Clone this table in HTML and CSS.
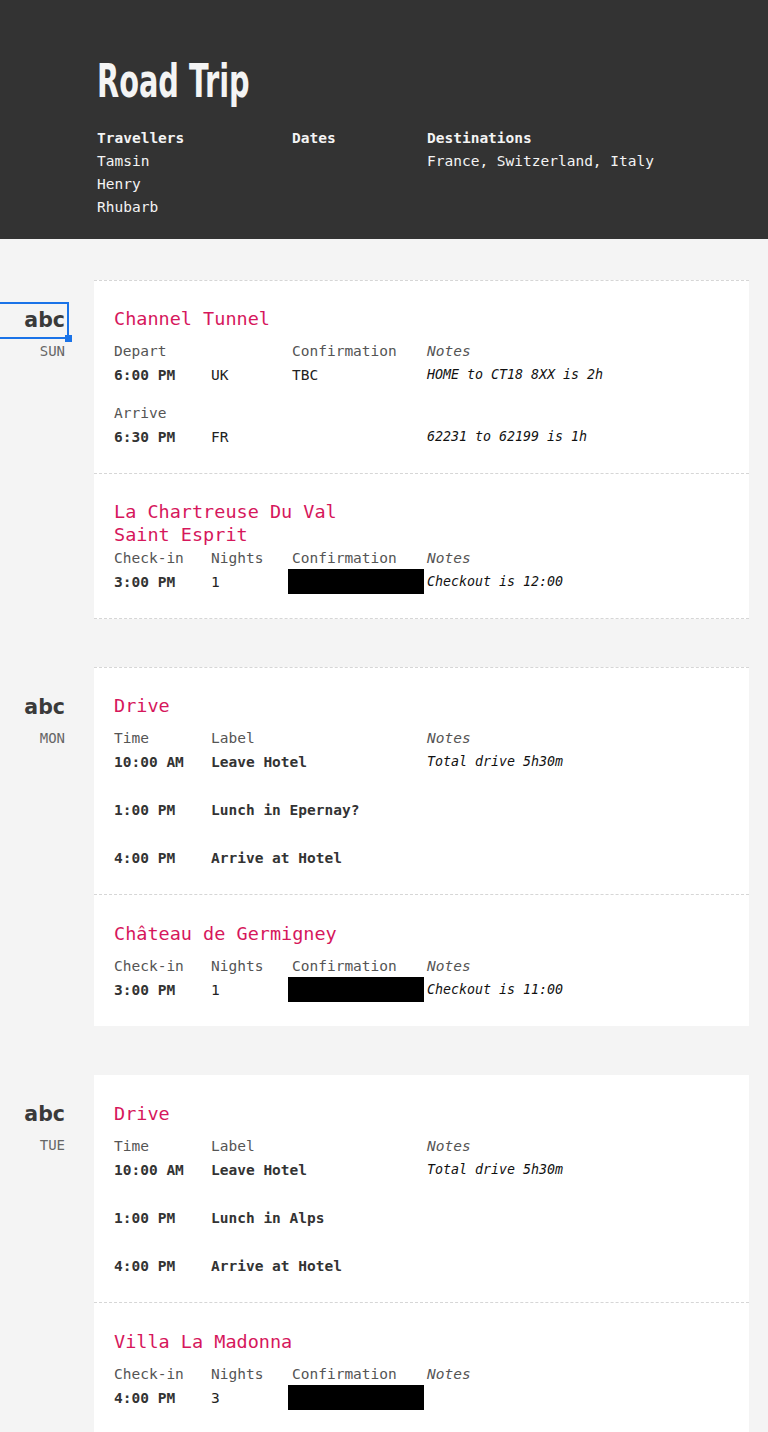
FILE: index.html
```html
<!DOCTYPE html>
<html lang="en">
<head>
    <meta charset="UTF-8">
    <meta name="viewport" content="width=device-width, initial-scale=1.0">
    <title>Road Trip</title>
    <link rel="stylesheet" href="styles.css">
</head>
<body>

    <header class="trip-header">
        <h1 class="trip-title"><span>Road Trip</span></h1>
        <div class="trip-meta">
            <div class="meta-col meta-wide">
                <div class="meta-label">Travellers</div>
                <div>Tamsin</div>
                <div>Henry</div>
                <div>Rhubarb</div>
            </div>
            <div class="meta-col meta-narrow">
                <div class="meta-label">Dates</div>
            </div>
            <div class="meta-col">
                <div class="meta-label">Destinations</div>
                <div>France, Switzerland, Italy</div>
            </div>
        </div>
    </header>

    <main class="days">

        <!-- Sunday -->
        <section class="day">
            <div class="day-side">
                <div class="day-num is-editing">abc</div>
                <div class="day-name">SUN</div>
            </div>
            <div class="card card-closed">
                <div class="entry">
                    <h2 class="entry-title">Channel Tunnel</h2>
                    <div class="grid">
                        <span class="label">Depart</span><span></span><span class="label">Confirmation</span><span class="label notes-label">Notes</span>
                        <span class="strong">6:00 PM</span><span class="plain">UK</span><span class="plain">TBC</span><span class="note">HOME to CT18 8XX is 2h</span>
                    </div>
                    <div class="grid">
                        <span class="label">Arrive</span><span></span><span></span><span></span>
                        <span class="strong">6:30 PM</span><span class="plain">FR</span><span></span><span class="note">62231 to 62199 is 1h</span>
                    </div>
                </div>
                <div class="entry">
                    <h2 class="entry-title wraps">La Chartreuse Du Val Saint Esprit</h2>
                    <div class="grid">
                        <span class="label">Check-in</span><span class="label">Nights</span><span class="label">Confirmation</span><span class="label notes-label">Notes</span>
                        <span class="strong">3:00 PM</span><span class="plain">1</span><span class="redacted"></span><span class="note">Checkout is 12:00</span>
                    </div>
                </div>
            </div>
        </section>

        <!-- Monday -->
        <section class="day">
            <div class="day-side">
                <div class="day-num">abc</div>
                <div class="day-name">MON</div>
            </div>
            <div class="card">
                <div class="entry">
                    <h2 class="entry-title">Drive</h2>
                    <div class="grid">
                        <span class="label">Time</span><span class="label">Label</span><span></span><span class="label notes-label">Notes</span>
                        <span class="strong">10:00 AM</span><span class="strong">Leave Hotel</span><span></span><span class="note">Total drive 5h30m</span>
                        <span class="spacer"></span>
                        <span class="strong">1:00 PM</span><span class="strong">Lunch in Epernay?</span><span></span><span></span>
                        <span class="spacer"></span>
                        <span class="strong">4:00 PM</span><span class="strong">Arrive at Hotel</span><span></span><span></span>
                    </div>
                </div>
                <div class="entry entry-stay">
                    <h2 class="entry-title">Château de Germigney</h2>
                    <div class="grid">
                        <span class="label">Check-in</span><span class="label">Nights</span><span class="label">Confirmation</span><span class="label notes-label">Notes</span>
                        <span class="strong">3:00 PM</span><span class="plain">1</span><span class="redacted"></span><span class="note">Checkout is 11:00</span>
                    </div>
                </div>
            </div>
        </section>

        <!-- Tuesday -->
        <section class="day">
            <div class="day-side">
                <div class="day-num">abc</div>
                <div class="day-name">TUE</div>
            </div>
            <div class="card card-open">
                <div class="entry">
                    <h2 class="entry-title">Drive</h2>
                    <div class="grid">
                        <span class="label">Time</span><span class="label">Label</span><span></span><span class="label notes-label">Notes</span>
                        <span class="strong">10:00 AM</span><span class="strong">Leave Hotel</span><span></span><span class="note">Total drive 5h30m</span>
                        <span class="spacer"></span>
                        <span class="strong">1:00 PM</span><span class="strong">Lunch in Alps</span><span></span><span></span>
                        <span class="spacer"></span>
                        <span class="strong">4:00 PM</span><span class="strong">Arrive at Hotel</span><span></span><span></span>
                    </div>
                </div>
                <div class="entry entry-stay">
                    <h2 class="entry-title">Villa La Madonna</h2>
                    <div class="grid">
                        <span class="label">Check-in</span><span class="label">Nights</span><span class="label">Confirmation</span><span class="label notes-label">Notes</span>
                        <span class="strong">4:00 PM</span><span class="plain">3</span><span class="redacted"></span><span></span>
                    </div>
                </div>
            </div>
        </section>

    </main>

</body>
</html>
```

FILE: styles.css
```css
body {
    margin: 0;
    background-color: #f4f4f4;
    font-family: "DejaVu Sans Mono", monospace;
    font-size: 14.5px;
    color: #333;
}

/* header */
.trip-header {
    background-color: #333;
    color: #f4f4f4;
    padding: 58px 20px 20px 97px;
}
.trip-title {
    margin: 0 0 23px;
    font-family: "DejaVu Sans Condensed", "DejaVu Sans", sans-serif;
    font-weight: bold;
    font-size: 46px;
    line-height: 46px;
}
.trip-title span {
    display: inline-block;
    transform: scaleX(0.695);
    transform-origin: left center;
}
.trip-meta {
    display: flex;
    line-height: 23px;
}
.meta-wide {
    width: 195px;
}
.meta-narrow {
    width: 135px;
}
.meta-label {
    font-weight: bold;
}

/* days */
.days {
    padding: 41px 19px 0 0;
}
.day {
    display: flex;
    gap: 25px;
    margin-bottom: 48px;
}
.day-side {
    flex: none;
    width: 69px;
    padding-top: 22px;
    text-align: right;
}
.day-num {
    position: relative;
    margin-left: -10px;
    padding-right: 2px;
    border: 2px solid transparent;
    font-family: "DejaVu Sans", sans-serif;
    font-weight: bold;
    font-size: 20.5px;
    line-height: 33px;
    color: #3a3a3a;
}
.day-num.is-editing {
    border-color: #1a73e8;
}
.day-num.is-editing::after {
    content: "";
    position: absolute;
    right: -5px;
    bottom: -5px;
    width: 7px;
    height: 7px;
    background-color: #1a73e8;
}
.day-name {
    padding-right: 4px;
    font-size: 14px;
    line-height: 24px;
    color: #666;
}

/* cards */
.card {
    flex: 1;
    background-color: #fff;
    border-top: 1px dashed #d6d6d6;
    border-bottom: 1px solid transparent;
}
.card-closed {
    border-bottom: 1px dashed #d6d6d6;
}
.card-open {
    border-top-color: transparent;
    margin-top: 1px;
}
.entry {
    padding: 26px 20px 24px;
}
.entry + .entry {
    border-top: 1px dashed #d6d6d6;
}
.entry-stay {
    padding-top: 27px;
    padding-bottom: 23px;
}
.entry-title {
    max-width: 260px;
    margin: 0 0 9px;
    font-size: 18.5px;
    font-weight: normal;
    line-height: 23px;
    color: #d6175c;
}
.entry-title.wraps {
    margin-bottom: 0;
}
.grid {
    display: grid;
    grid-template-columns: 97px 81px 135px 1fr;
    line-height: 24px;
    white-space: nowrap;
}
.grid + .grid {
    margin-top: 14px;
}
.label {
    color: #555;
}
.notes-label {
    font-style: italic;
}
.strong {
    font-weight: bold;
    color: #333;
}
.plain {
    color: #222;
}
.note {
    font-style: italic;
    font-size: 13.3px;
    color: #111;
}
.redacted {
    height: 25px;
    margin: -1px 3px 0 -4px;
    background-color: #000;
}
.spacer {
    grid-column: 1 / -1;
    height: 24px;
}
```
